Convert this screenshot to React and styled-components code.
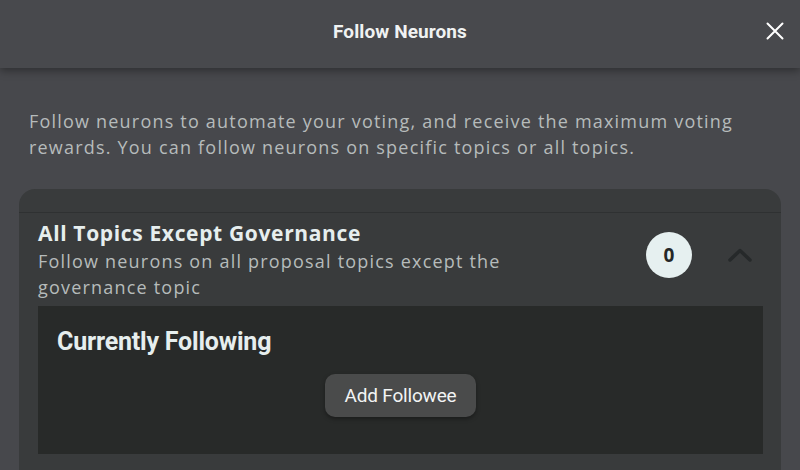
import React from 'react'
import styled, { createGlobalStyle } from 'styled-components'

const GlobalStyle = createGlobalStyle`
    body {
        margin: 0;
        background: #47484c;
        font-family: 'Open Sans', 'Liberation Sans', sans-serif;
        overflow: hidden;
    }
`

const Modal = styled.div`
    width: 800px;
    height: 470px;
    background: #47484c;
    overflow: hidden;
`
const Header = styled.header`
    position: relative;
    height: 68px;
    display: flex;
    align-items: center;
    justify-content: center;
    background: #48494d;
    box-shadow: 0 3px 8px rgba(0, 0, 0, 0.35);
`
const HeaderTitle = styled.h2`
    margin: 0 0 6px;
    font-family: Roboto, 'Liberation Sans', sans-serif;
    font-size: 19px;
    font-weight: 700;
    color: #f0f2f2;
    letter-spacing: 0.1px;
`
const CloseButton = styled.button`
    position: absolute;
    right: 14px;
    top: 20px;
    width: 22px;
    height: 22px;
    padding: 0;
    border: none;
    background: none;
    cursor: pointer;
    display: flex;
    align-items: center;
    justify-content: center;
`
const Body = styled.div`
    padding: 40px 19px 0;
`
const Intro = styled.p`
    margin: 0 0 29px 10px;
    width: 740px;
    font-size: 18px;
    line-height: 26px;
    color: #b6bbbb;
    letter-spacing: 1.2px;
`
const Card = styled.section`
    background: #393b3c;
    border-radius: 16px 16px 0 0;
    padding-top: 23px;
`
const CardHead = styled.div`
    border-top: 1px solid #2f3132;
    display: flex;
    align-items: center;
    padding: 5px 29px 6px 19px;
`
const CardText = styled.div`
    flex: 1;
`
const CardTitle = styled.h3`
    margin: 0;
    font-size: 21px;
    line-height: 30px;
    font-weight: 700;
    color: #e6eeee;
    letter-spacing: 0.65px;
`
const CardSub = styled.p`
    margin: 0;
    width: 510px;
    font-size: 18px;
    line-height: 26px;
    color: #b6bbbb;
    letter-spacing: 1.2px;
`
const Badge = styled.span`
    width: 46px;
    height: 46px;
    border-radius: 50%;
    background: #e6f0f0;
    color: #252727;
    display: flex;
    align-items: center;
    justify-content: center;
    font-size: 19px;
    font-weight: 700;
    margin-right: 36px;
    margin-top: -8px;
`
const Chevron = styled.svg`
    width: 24px;
    height: 14px;
    margin-top: -8px;
`
const Panel = styled.div`
    margin: 0 18px 0 19px;
    height: 148px;
    background: #282a29;
    padding: 21px 19px 0;
    box-sizing: border-box;
`
const PanelTitle = styled.h4`
    margin: 0;
    font-family: Roboto, 'Liberation Sans', sans-serif;
    font-size: 25px;
    line-height: 30px;
    font-weight: 700;
    color: #e6eeee;
    letter-spacing: -0.2px;
`
const PanelActions = styled.div`
    display: flex;
    justify-content: center;
    margin-top: 17px;
`
const Button = styled.button`
    height: 43px;
    padding: 0 20px;
    border: none;
    border-radius: 10px;
    background: #4a4b4b;
    color: #f2f4f4;
    font-family: Roboto, 'Liberation Sans', sans-serif;
    font-size: 19px;
    letter-spacing: -0.2px;
    box-shadow: 0 2px 4px rgba(0, 0, 0, 0.35);
    cursor: pointer;
`
const CardFoot = styled.div`
    height: 30px;
`

export default function App() {
    return (
        <Modal>
            <GlobalStyle />
            <Header>
                <HeaderTitle>Follow Neurons</HeaderTitle>
                <CloseButton aria-label="Close">
                    <svg width="18" height="18" viewBox="0 0 18 18">
                        <path d="M1.5 1.5 L16.5 16.5 M16.5 1.5 L1.5 16.5" stroke="#ffffff" strokeWidth="2" strokeLinecap="round" />
                    </svg>
                </CloseButton>
            </Header>
            <Body>
                <Intro>
                    Follow neurons to automate your voting, and receive the maximum voting
                    rewards. You can follow neurons on specific topics or all topics.
                </Intro>
                <Card>
                    <CardHead>
                        <CardText>
                            <CardTitle>All Topics Except Governance</CardTitle>
                            <CardSub>Follow neurons on all proposal topics except the governance topic</CardSub>
                        </CardText>
                        <Badge>0</Badge>
                        <Chevron viewBox="0 0 24 14">
                            <path d="M2 12 L12 2.5 L22 12" fill="none" stroke="#26292a" strokeWidth="3.5" strokeLinecap="round" strokeLinejoin="round" />
                        </Chevron>
                    </CardHead>
                    <Panel>
                        <PanelTitle>Currently Following</PanelTitle>
                        <PanelActions>
                            <Button>Add Followee</Button>
                        </PanelActions>
                    </Panel>
                    <CardFoot />
                </Card>
            </Body>
        </Modal>
    )
}
